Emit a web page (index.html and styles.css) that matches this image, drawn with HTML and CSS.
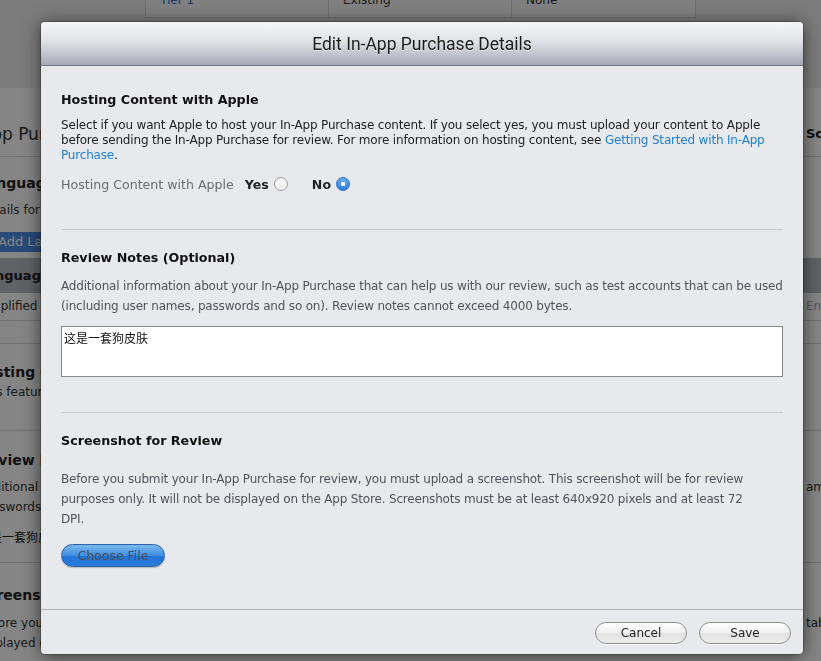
FILE: index.html
```html
<!DOCTYPE html>
<html lang="en">
<head>
<meta charset="utf-8">
<title>Edit In-App Purchase Details</title>
<link rel="stylesheet" href="styles.css">
</head>
<body>
<div class="page">
  <div class="top">
    <div class="tiers"><span class="tlink">Tier 1</span><span>Existing</span><span>None</span></div>
  </div>
  <div class="sheet">
    <section class="bsec ba">
      <div class="split"><div class="btitle">In-App Purchases</div><b class="rfrag">Screenshot</b></div>
    </section>
    <section class="bsec bb">
      <div class="bh">Languages</div>
      <div class="bt">Details for each language</div>
      <div class="bbtn">Add Language</div>
      <div class="bthead">Language</div>
      <div class="btrow split"><span>Simplified Chinese</span><span class="rlight">English</span></div>
    </section>
    <div class="bspacer"></div>
    <section class="bsec bc">
      <div class="bh">Hosting Content with Apple</div>
      <div class="bt">This feature is not enabled</div>
    </section>
    <section class="bsec bd">
      <div class="bh">Review Notes</div>
      <div class="bp">
        <div class="split"><span>Additional information about your In-App Purchase</span><span>amount</span></div>
        <div>passwords and so on</div>
      </div>
      <div class="bcjk">这是一套狗皮肤</div>
    </section>
    <section class="bsec be">
      <div class="bh">Screenshot</div>
      <div class="bp">
        <div class="split"><span>Before you submit your In-App Purchase</span><span>tab</span></div>
        <div>displayed on the App Store</div>
      </div>
    </section>
  </div>
</div>

<div class="scrim"></div>

<div class="modal">
  <div class="modal-head">Edit In-App Purchase Details</div>
  <div class="modal-body">
    <div class="msec">
      <h2>Hosting Content with Apple</h2>
      <p class="desc dark">Select if you want Apple to host your In-App Purchase content. If you select yes, you must upload your content to Apple before sending the In-App Purchase for review. For more information on hosting content, see <a class="link">Getting Started with In-App Purchase</a>.</p>
      <div class="radio-row">
        <span class="rlabel">Hosting Content with Apple</span>
        <span class="opt">Yes</span><span class="radio"></span>
        <span class="opt opt-no">No</span><span class="radio on"></span>
      </div>
    </div>
    <div class="msec">
      <h2>Review Notes (Optional)</h2>
      <p class="desc gray">Additional information about your In-App Purchase that can help us with our review, such as test accounts that can be used (including user names, passwords and so on). Review notes cannot exceed 4000 bytes.</p>
      <div class="notes">这是一套狗皮肤</div>
    </div>
    <div class="msec last">
      <h2>Screenshot for Review</h2>
      <p class="desc gray shot">Before you submit your In-App Purchase for review, you must upload a screenshot. This screenshot will be for review purposes only. It will not be displayed on the App Store. Screenshots must be at least 640x920 pixels and at least 72 DPI.</p>
      <div class="choose">Choose File</div>
    </div>
  </div>
  <div class="modal-foot">
    <div class="btn">Cancel</div>
    <div class="btn">Save</div>
  </div>
</div>
</body>
</html>
```
FILE: styles.css
```css
* { box-sizing: border-box; }
html, body { margin: 0; padding: 0; }
body {
  width: 821px;
  height: 661px;
  overflow: hidden;
  position: relative;
  background: #fff;
  font-family: "DejaVu Sans", "Lucida Grande", sans-serif;
  font-size: 11px;
  color: #222;
}

/* ---------- background page ---------- */
.page { margin-left: -22px; width: 900px; }
.top { height: 88px; background: #ededed; padding-left: 167px; overflow: hidden; }
.tiers {
  display: grid;
  grid-template-columns: 183px 183px 184px;
  width: 551px;
  margin-top: -9px;
  height: 27px;
  border: 1px solid #d4d4d4;
  border-top: none;
  background: #f6f6f6;
}
.tiers span { padding: 0 14px; line-height: 18px; font-size: 12px; color: #333; border-right: 1px solid #d4d4d4; }
.tiers span:last-child { border-right: none; }
.tiers .tlink { color: #2a6fc0; }
.sheet { background: #fff; }
.bsec { border-bottom: 1px solid #d6d6d6; }
.split { display: grid; grid-template-columns: 828px auto; }
.ba { height: 69px; padding-top: 36px; }
.btitle { font-size: 17px; line-height: 20px; margin-left: -20px; color: #333; }
.rfrag { font-size: 13px; line-height: 20px; color: #222; }
.bb { padding-top: 16px; }
.bh { font-weight: bold; font-size: 14px; line-height: 20px; color: #222; }
.bt { font-size: 12px; line-height: 16px; margin-top: 9px; color: #333; }
.bbtn {
  width: 110px; height: 20px; margin-top: 14px; margin-left: 12px;
  background: #4f8fe6; color: #fff; font-size: 13px; line-height: 20px;
  padding-left: 8px; border-radius: 3px;
}
.bthead {
  height: 35px; margin-top: 6px; background: #b9bcc2;
  font-weight: bold; font-size: 13px; line-height: 35px; color: #222;
  margin-left: -20px; padding-left: 20px;
}
.btrow { height: 27px; line-height: 27px; font-size: 12px; color: #333; }
.rlight { color: #aaa; }
.bspacer { height: 23px; border-bottom: 1px solid #d6d6d6; }
.bc { height: 87px; padding-top: 18px; }
.bc .bh { margin-left: -4px; }
.bc .bt { margin-top: 3px; line-height: 15px; }
.bd { height: 132px; padding-top: 19px; }
.bp { margin-top: 7px; font-size: 12px; line-height: 20px; color: #333; }
.bcjk { margin-top: 10px; line-height: 20px; font-size: 12px; font-family: "Noto Sans CJK SC", sans-serif; }
.be { border-bottom: none; padding-top: 22px; height: 120px; }
.be .bp { margin-top: 8px; }

.scrim { position: fixed; inset: 0; background: rgba(0, 0, 0, 0.48); }

/* ---------- modal ---------- */
.modal {
  position: absolute;
  left: 41px;
  top: 22px;
  width: 762px;
  height: 632px;
  background: #e8e9ed;
  border-radius: 4px;
  box-shadow: 0 2px 18px rgba(0, 0, 0, 0.6), 0 0 0 1px rgba(0, 0, 0, 0.2);
  display: flex;
  flex-direction: column;
  overflow: hidden;
}
.modal-head {
  height: 44px;
  flex: none;
  border-bottom: 1px solid #6e7385;
  background: linear-gradient(#f5f6f8, #dfe1e6 45%, #a7abb8);
  text-align: center;
  font-family: Roboto, "Liberation Sans", sans-serif;
  font-size: 17.5px;
  line-height: 45px;
  color: #1c1c1c;
  text-shadow: 0 1px 0 rgba(255, 255, 255, 0.55);
}
.modal-body { flex: 1; padding: 24px 20px 0; }
.msec { border-bottom: 1px solid #c9cacf; padding-bottom: 35px; margin-bottom: 18px; }
.msec.last { border-bottom: none; padding-bottom: 0; margin-bottom: 0; }
h2 { margin: 0; font-size: 12.7px; line-height: 20px; font-weight: bold; color: #111; }
.desc { margin: 8px -6px 0 0; font-size: 12px; letter-spacing: -0.18px; }
.desc.dark { color: #1e1e1e; line-height: 15px; }
.desc.gray { color: #4f545c; line-height: 20px; }
.desc.shot { margin-top: 18px; max-width: 700px; }
.link { color: #1f80d2; text-decoration: none; }

.radio-row { display: flex; align-items: center; height: 20px; margin-top: 11px; font-size: 12.6px; }
.rlabel { color: #6c6c6c; margin-right: 11px; }
.opt { font-weight: bold; color: #222; margin-right: 5px; }
.opt-no { margin-left: 24px; margin-right: 5px; }
.radio {
  width: 14px; height: 14px; border-radius: 50%;
  border: 1px solid #9d9d9d;
  background: linear-gradient(#ffffff, #eeeeee);
  box-shadow: inset 0 1px 1px rgba(0, 0, 0, 0.08);
}
.radio.on {
  border-color: #2f71c4;
  background: radial-gradient(circle, #fff 0 2px, transparent 2.5px), linear-gradient(#6cb1f7, #2a7de2);
}

.notes {
  margin-top: 10px;
  height: 51px;
  background: #fff;
  border: 1px solid #878787;
  padding: 4px 2px;
  font-family: "Noto Sans CJK SC", sans-serif;
  font-size: 12px;
  line-height: 14px;
  color: #111;
}

.choose {
  margin-top: 15px;
  width: 104px;
  height: 23px;
  border-radius: 12px;
  border: 1px solid #2e62a6;
  background: linear-gradient(#7ab8f0, #3f8ee0 50%, #2273d6 51%, #2a7ddb);
  color: #4a4d55;
  text-align: center;
  font-size: 12.5px;
  line-height: 21px;
  box-shadow: 0 1px 1px rgba(0, 0, 0, 0.2);
}

.modal-foot {
  height: 45px;
  flex: none;
  border-top: 1px solid #b4b6bc;
  display: flex;
  justify-content: flex-end;
  gap: 12px;
  padding: 12px 12px 0;
}
.btn {
  width: 92px;
  height: 22px;
  border-radius: 11px;
  border: 1px solid #8e8e8e;
  background: linear-gradient(#fefefe, #f1f1f1 50%, #e2e2e2 52%, #ececec);
  text-align: center;
  font-size: 12px;
  line-height: 20px;
  color: #1e1e1e;
  box-shadow: 0 1px 0 rgba(255, 255, 255, 0.8);
}
```
